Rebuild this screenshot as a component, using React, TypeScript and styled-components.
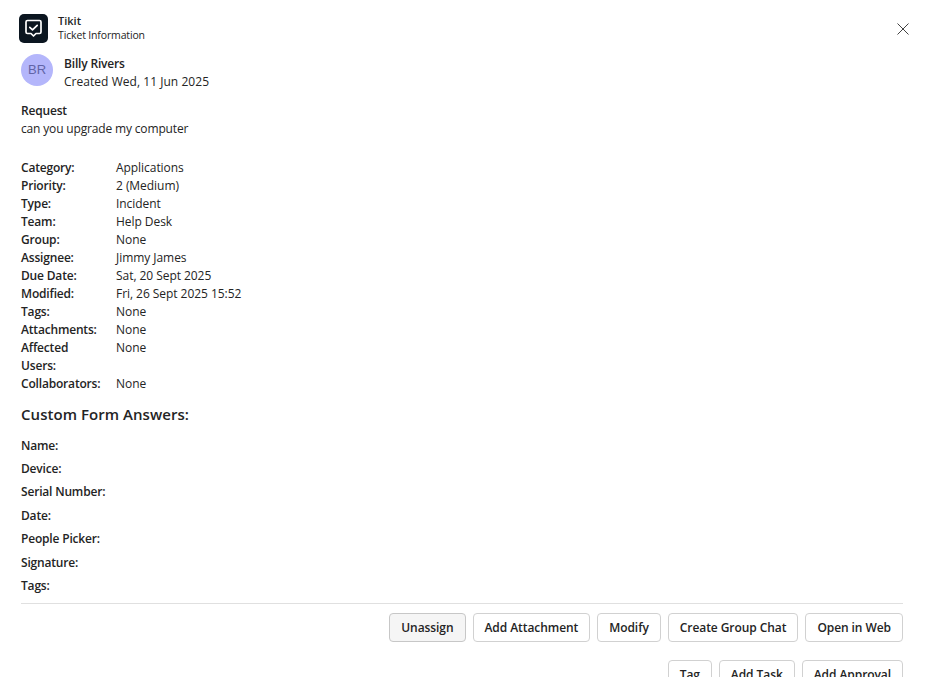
import React from "react"
import styled, { createGlobalStyle } from "styled-components"

const GlobalStyle = createGlobalStyle`
	html, body {
		margin: 0;
		height: 100%;
		overflow: hidden;
		background: #ffffff;
	}
	body {
		font-family: "Open Sans", "Noto Sans", "Liberation Sans", sans-serif;
		font-size: 12px;
		line-height: 18px;
		letter-spacing: -0.05px;
		color: #242424;
	}
`

const Page = styled.div`
	display: flex;
	flex-direction: column;
	padding: 14px 31px 0 21px;
`

const Header = styled.header`
	display: flex;
	align-items: center;
	gap: 10px;
	height: 29px;
	margin-left: -2px;
	margin-bottom: 11px;
`

const Logo = styled.div`
	display: flex;
	width: 29px;
	height: 29px;
	border-radius: 5px;
	background: #0b1620;
`

const AppInfo = styled.div`
	flex: 1;
	display: flex;
	flex-direction: column;
	margin-top: -2px;
	font-size: 10.5px;
	line-height: 14px;
	letter-spacing: -0.15px;
`

const AppName = styled.span`
	font-size: 11px;
	font-weight: 600;
	letter-spacing: 0;
`

const CloseButton = styled.button`
	display: flex;
	padding: 0;
	margin-right: -6px;
	border: none;
	background: none;
	color: #424242;
`

const Person = styled.div`
	display: flex;
	align-items: flex-start;
	gap: 11px;
	margin-bottom: 11px;
`

const Avatar = styled.div`
	display: flex;
	align-items: center;
	justify-content: center;
	width: 32px;
	height: 32px;
	border-radius: 50%;
	background: #b4b6fb;
	color: #6264a7;
	font-family: "Liberation Sans", sans-serif;
	font-size: 13px;
	letter-spacing: 0;
`

const Stack = styled.div`
	display: flex;
	flex-direction: column;
`

const PersonText = styled(Stack)`
	padding-top: 1px;
`

const CreatedText = styled.span`
	letter-spacing: 0.04px;
`

const Strong = styled.span`
	font-weight: 600;
	letter-spacing: -0.18px;
`

const Request = styled(Stack)`
	margin-bottom: 21px;
`

const RequestText = styled.span`
	letter-spacing: -0.16px;
`

const Details = styled.dl`
	display: grid;
	grid-template-columns: 95px 1fr;
	margin: 0;
`

const Label = styled.dt`
	width: 80px;
	font-weight: 600;
	letter-spacing: -0.18px;
`

const Value = styled.dd`
	margin: 0;
`

const SectionTitle = styled.h2`
	margin: 10px 0 11.6px;
	font-size: 15px;
	line-height: 22px;
	font-weight: 600;
	letter-spacing: 0.05px;
`

const Answers = styled.div`
	display: flex;
	flex-direction: column;
	gap: 5.4px;
`

const Divider = styled.hr`
	width: 100%;
	margin: 8.2px 0 9px;
	border: none;
	border-top: 1px solid #e0e0e0;
`

const Actions = styled.div`
	display: flex;
	flex-direction: column;
	gap: 18px;
`

const ActionRow = styled.div`
	display: flex;
	justify-content: flex-end;
	gap: 7px;
`

const Button = styled.button<{ $active?: boolean }>`
	height: 29px;
	padding: 0 11px;
	border: 1px solid ${(p) => (p.$active ? "#c7c7c7" : "#d1d1d1")};
	border-radius: 4px;
	background: ${(p) => (p.$active ? "#f5f5f5" : "#ffffff")};
	color: #242424;
	font: inherit;
	font-weight: 600;
	letter-spacing: -0.07px;
`

const details: [string, string][] = [
	["Category:", "Applications"],
	["Priority:", "2 (Medium)"],
	["Type:", "Incident"],
	["Team:", "Help Desk"],
	["Group:", "None"],
	["Assignee:", "Jimmy James"],
	["Due Date:", "Sat, 20 Sept 2025"],
	["Modified:", "Fri, 26 Sept 2025 15:52"],
	["Tags:", "None"],
	["Attachments:", "None"],
	["Affected Users:", "None"],
	["Collaborators:", "None"],
]

const answers = ["Name:", "Device:", "Serial Number:", "Date:", "People Picker:", "Signature:", "Tags:"]

const firstActions = ["Add Attachment", "Modify", "Create Group Chat", "Open in Web"]
const secondActions = ["Tag", "Add Task", "Add Approval"]

export default function App() {
	return (
		<Page>
			<GlobalStyle />
			<Header>
				<Logo>
					<svg width="29" height="29" viewBox="0 0 29 29" fill="none" stroke="#ffffff" strokeWidth="1.7" strokeLinejoin="round" strokeLinecap="round">
						<path d="M8.500 6.500h12a1.500 1.500 0 0 1 1.500 1.500v10a1.500 1.500 0 0 1-1.500 1.500h-3.500l-2.500 2.500-2.500-2.500H8.500A1.500 1.500 0 0 1 7 18V8a1.500 1.500 0 0 1 1.500-1.500z" />
						<path d="M10.800 13.300l2.700 2.500 4.700-4.500" />
					</svg>
				</Logo>
				<AppInfo>
					<AppName>Tikit</AppName>
					<span>Ticket Information</span>
				</AppInfo>
				<CloseButton aria-label="Close">
					<svg width="12" height="12" viewBox="0 0 12 12" fill="none" stroke="currentColor" strokeWidth="1">
						<path d="M0.500 0.500l11 11M11.500 0.500l-11 11" />
					</svg>
				</CloseButton>
			</Header>
			<Person>
				<Avatar>BR</Avatar>
				<PersonText>
					<Strong>Billy Rivers</Strong>
					<CreatedText>Created Wed, 11 Jun 2025</CreatedText>
				</PersonText>
			</Person>
			<Request>
				<Strong>Request</Strong>
				<RequestText>can you upgrade my computer</RequestText>
			</Request>
			<Details>
				{details.map(([label, value]) => (
					<React.Fragment key={label}>
						<Label>{label}</Label>
						<Value>{value}</Value>
					</React.Fragment>
				))}
			</Details>
			<SectionTitle>Custom Form Answers:</SectionTitle>
			<Answers>
				{answers.map((answer) => (
					<Strong key={answer}>{answer}</Strong>
				))}
			</Answers>
			<Divider />
			<Actions>
				<ActionRow>
					<Button $active>Unassign</Button>
					{firstActions.map((action) => (
						<Button key={action}>{action}</Button>
					))}
				</ActionRow>
				<ActionRow>
					{secondActions.map((action) => (
						<Button key={action}>{action}</Button>
					))}
				</ActionRow>
			</Actions>
		</Page>
	)
}
